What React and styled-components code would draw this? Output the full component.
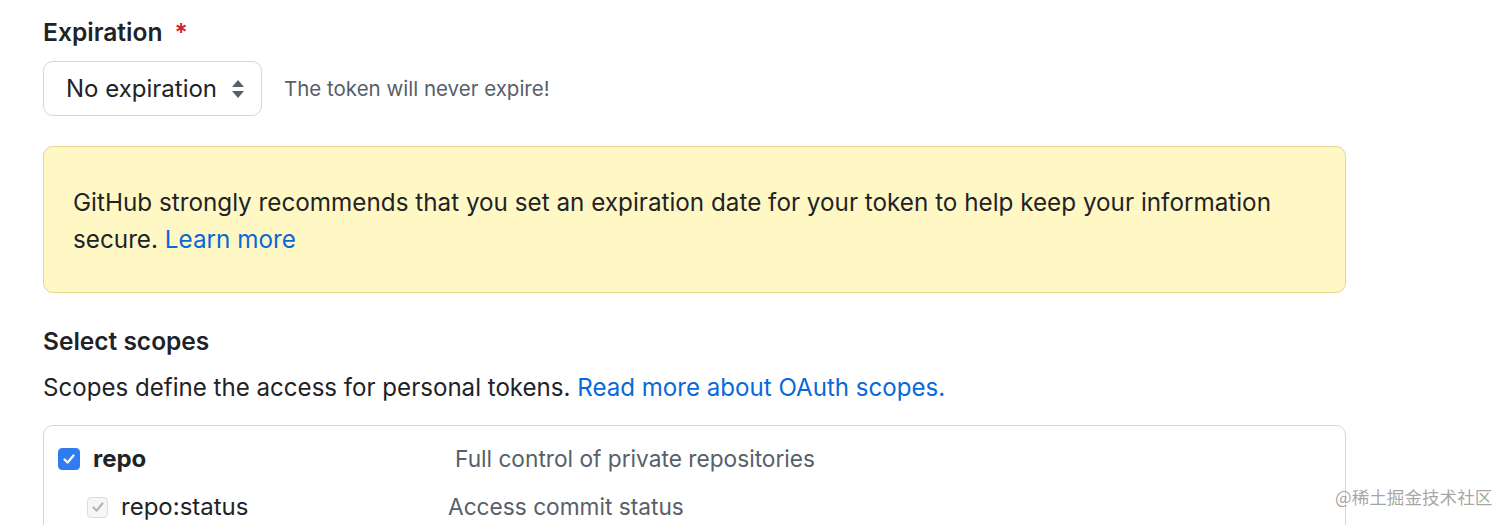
import React from "react";
import styled, { createGlobalStyle } from "styled-components";

const Global = createGlobalStyle`
  html, body { margin: 0; padding: 0; background: #ffffff; }
  body {
    font-family: Inter, "Noto Sans", "Liberation Sans", sans-serif;
    color: #1f2328;
    -webkit-font-smoothing: antialiased;
  }
`;

const Page = styled.div`
  position: relative;
  width: 1512px;
  height: 525px;
  overflow: hidden;
  box-sizing: border-box;
  padding: 17px 0 0 43px;
`;

const Form = styled.div`
  width: 1303px;
  display: flex;
  flex-direction: column;
`;

const Label = styled.div`
  font-size: 24.6px;
  font-weight: 600;
  line-height: 30px;
`;

const Required = styled.span`
  color: #cf222e;
  margin-left: 12px;
  font-weight: 600;
`;

const SelectRow = styled.div`
  display: flex;
  align-items: center;
  gap: 22px;
  margin-top: 14px;
`;

const SelectBox = styled.div`
  box-sizing: border-box;
  width: 219px;
  height: 55px;
  border: 1px solid #d0d7de;
  border-radius: 10px;
  background: #ffffff;
  display: flex;
  align-items: center;
  justify-content: space-between;
  padding: 0 16px 0 22px;
  font-size: 24px;
  color: #1f2328;
`;

const Hint = styled.span`
  font-size: 20.5px;
  color: #57606a;
`;

const Flash = styled.div`
  box-sizing: border-box;
  margin-top: 30px;
  height: 147px;
  border: 1px solid #e8d48a;
  border-radius: 10px;
  background: #fff8c5;
  padding: 37px 29px 0;
  font-size: 24.25px;
  line-height: 37px;
  color: #1f2328;
`;

const Link = styled.a`
  color: #0969da;
  text-decoration: none;
`;

const Heading = styled.div`
  margin-top: 33px;
  font-size: 24.5px;
  font-weight: 600;
  line-height: 30px;
`;

const Note = styled.div`
  margin-top: 17px;
  font-size: 24.1px;
  line-height: 30px;
`;

const ScopeBox = styled.div`
  box-sizing: border-box;
  margin-top: 22px;
  border: 1px solid #d0d7de;
  border-radius: 10px;
  height: 200px;
  padding: 18px 14px 0;
  display: flex;
  flex-direction: column;
  gap: 18px;
`;

const ScopeRow = styled.div`
  display: flex;
  align-items: center;
  line-height: 30px;
  font-size: 24px;
  padding-left: ${(p) => (p.$level ? 29 : 0)}px;
`;

const ScopeName = styled.div`
  display: flex;
  align-items: center;
  gap: 13px;
  width: ${(p) => p.$width}px;
  flex-shrink: 0;
  font-weight: ${(p) => (p.$strong ? 700 : 400)};
  color: #1f2328;
`;

const Check = styled.span`
  box-sizing: border-box;
  width: ${(p) => (p.$disabled ? 21 : 22)}px;
  height: ${(p) => (p.$disabled ? 21 : 22)}px;
  border-radius: 4px;
  display: inline-flex;
  align-items: center;
  justify-content: center;
  background: ${(p) => (p.$disabled ? "#f6f6f6" : "#2f7cf0")};
  border: 1px solid ${(p) => (p.$disabled ? "#dcdcdc" : "#2f7cf0")};
`;

const Desc = styled.div`
  color: #57606a;
  font-size: 22.7px;
`;

const Watermark = styled.div`
  position: absolute;
  left: 1335px;
  top: 486px;
  font-family: "Noto Sans CJK SC", sans-serif;
  font-size: 17.6px;
  line-height: 22px;
  color: rgba(150, 150, 150, 0.85);
`;

const Arrows = () => (
  <svg width="14" height="20" viewBox="0 0 14 20">
    <path d="M7 1 L13 8 L1 8 Z" fill="#57606a" />
    <path d="M7 19 L13 12 L1 12 Z" fill="#57606a" />
  </svg>
);

const Tick = ({ color }) => (
  <svg width="14" height="14" viewBox="0 0 14 14">
    <path d="M2.5 7.5 L5.6 10.5 L11.5 3.5" fill="none" stroke={color} strokeWidth="2.2" strokeLinecap="round" strokeLinejoin="round" />
  </svg>
);

export default function App() {
  return (
    <Page>
      <Global />
      <Form>
        <Label>
          Expiration<Required>*</Required>
        </Label>
        <SelectRow>
          <SelectBox>
            <span>No expiration</span>
            <Arrows />
          </SelectBox>
          <Hint>The token will never expire!</Hint>
        </SelectRow>
        <Flash>
          <span>GitHub strongly recommends that you set an expiration date for your token to help keep your information</span>
          <br />
          <span>secure. </span>
          <Link href="#">Learn more</Link>
        </Flash>
        <Heading>Select scopes</Heading>
        <Note>
          <span>Scopes define the access for personal tokens. </span>
          <Link href="#">Read more about OAuth scopes.</Link>
        </Note>
        <ScopeBox>
          <ScopeRow>
            <ScopeName $width={397} $strong>
              <Check>
                <Tick color="#ffffff" />
              </Check>
              repo
            </ScopeName>
            <Desc>Full control of private repositories</Desc>
          </ScopeRow>
          <ScopeRow $level={1}>
            <ScopeName $width={361}>
              <Check $disabled>
                <Tick color="#b5b5b5" />
              </Check>
              repo:status
            </ScopeName>
            <Desc>Access commit status</Desc>
          </ScopeRow>
        </ScopeBox>
      </Form>
      <Watermark>@稀土掘金技术社区</Watermark>
    </Page>
  );
}
